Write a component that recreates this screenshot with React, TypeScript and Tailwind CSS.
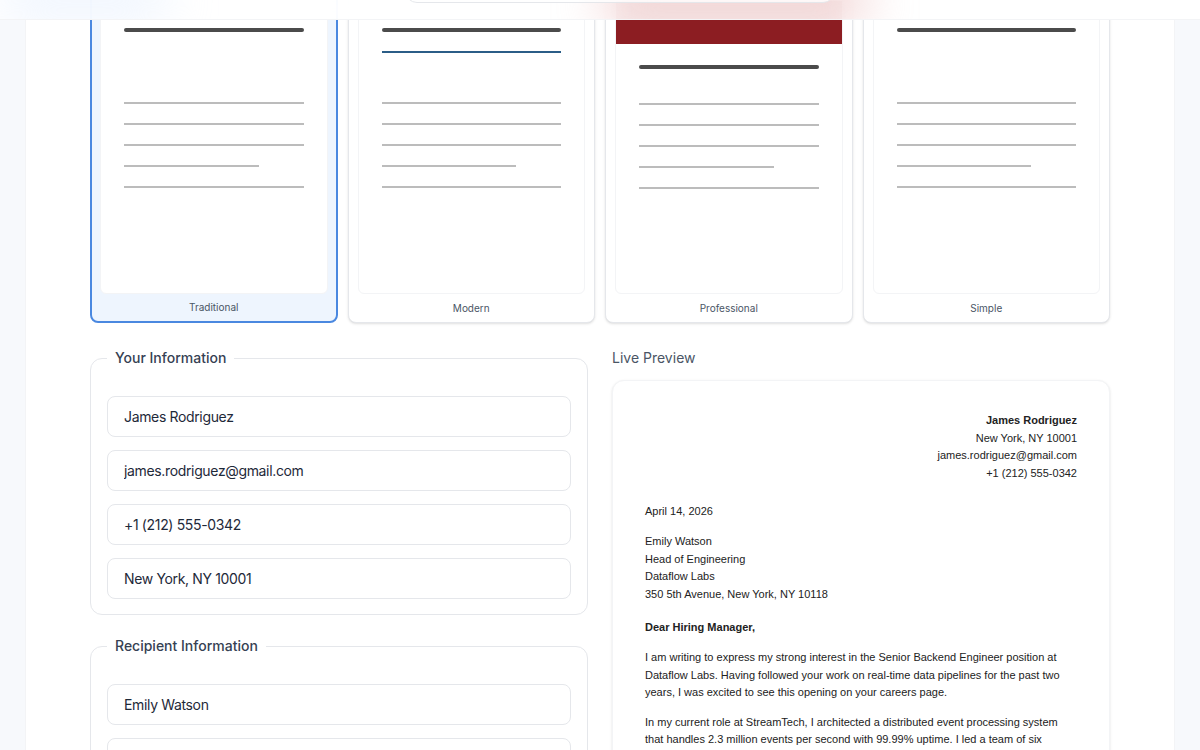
import * as React from "react";

type Variant = "traditional" | "modern" | "professional" | "simple";

interface Template {
  id: Variant;
  name: string;
}

const templates: Template[] = [
  { id: "traditional", name: "Traditional" },
  { id: "modern", name: "Modern" },
  { id: "professional", name: "Professional" },
  { id: "simple", name: "Simple" },
];

const sender = {
  name: "James Rodriguez",
  email: "james.rodriguez@gmail.com",
  phone: "+1 (212) 555-0342",
  location: "New York, NY 10001",
};

const recipient = {
  name: "Emily Watson",
  title: "Head of Engineering",
  company: "Dataflow Labs",
  address: "350 5th Avenue, New York, NY 10118",
};

const paragraphs = [
  "I am writing to express my strong interest in the Senior Backend Engineer position at Dataflow Labs. Having followed your work on real-time data pipelines for the past two years, I was excited to see this opening on your careers page.",
  "In my current role at StreamTech, I architected a distributed event processing system that handles 2.3 million events per second with 99.99% uptime. I led a team of six engineers through a migration from batch jobs to streaming, cutting data latency from hours to under two seconds.",
  "I would welcome the chance to bring this experience to Dataflow Labs and help scale the platform your customers rely on. Thank you for your time and consideration.",
];

const Thumb = ({ variant }: { variant: Variant }) => {
  const linesTop =
    variant === "modern" ? "mt-[49px]" : variant === "professional" ? "mt-[34px]" : "mt-[70px]";

  return (
    <div className="h-[294px] overflow-hidden rounded-b-md border border-gray-100 bg-white">
      {variant === "professional" && <div className="h-[43px] bg-[#8c1d22]" />}
      <div className={variant === "professional" ? "px-[23px] pt-[21px]" : "px-[23px] pt-[27px]"}>
        <div className="h-[4px] rounded-full bg-[#4b4b4b]" />
        {variant === "modern" && <div className="mt-[19px] h-[2px] bg-[#2b5d87]" />}
        <div className={`flex flex-col gap-[19px] ${linesTop}`}>
          <div className="h-[2px] bg-[#bcbcbc]" />
          <div className="h-[2px] bg-[#bcbcbc]" />
          <div className="h-[2px] bg-[#bcbcbc]" />
          <div className="h-[2px] w-3/4 bg-[#bcbcbc]" />
          <div className="h-[2px] bg-[#bcbcbc]" />
        </div>
      </div>
    </div>
  );
};

const TemplateCard = ({ template, selected }: { template: Template; selected: boolean }) => (
  <button
    type="button"
    className={
      selected
        ? "flex flex-col rounded-lg border-2 border-[#4a88e0] bg-[#eef5fe] px-[8px] pt-[8px] text-left"
        : "flex flex-col rounded-lg border border-gray-200 bg-white px-[9px] pt-[9px] text-left shadow-sm"
    }
  >
    <Thumb variant={template.id} />
    <span
      className={
        selected
          ? "flex h-[27px] items-center justify-center text-[10px] text-gray-600"
          : "flex h-[28px] items-center justify-center text-[10px] text-gray-600"
      }
    >
      {template.name}
    </span>
  </button>
);

const Field = ({ value }: { value: string }) => (
  <input
    defaultValue={value}
    className="h-[41px] w-full rounded-lg border border-gray-200 bg-white px-4 text-[14px] tracking-tight text-gray-800 outline-none"
  />
);

const Section = ({ title, values }: { title: string; values: string[] }) => (
  <fieldset className="rounded-xl border border-gray-200 px-4 pb-[15px] pt-[28px]">
    <legend className="px-2 text-sm font-medium leading-5 text-gray-700">{title}</legend>
    <div className="flex flex-col gap-[13px]">
      {values.map((v) => (
        <Field key={v} value={v} />
      ))}
    </div>
  </fieldset>
);

export default function App() {
  return (
    <div className="relative h-[750px] overflow-hidden bg-[#f7f9fc] font-['Inter',sans-serif]">
      {/* header, mostly scrolled away */}
      <div className="fixed inset-x-0 top-0 z-10 h-[20px] overflow-hidden border-b border-gray-100 bg-white/95 backdrop-blur-md">
        <div className="absolute left-0 top-[-20px] h-[40px] w-[170px] rounded-full bg-blue-100/50 blur-xl" />
        <div className="absolute left-[600px] top-[-24px] h-[48px] w-[270px] rounded-full bg-[#e9b7b7]/60 blur-xl" />
        <div className="absolute left-[405px] top-[-40px] h-[43px] w-[430px] rounded-xl border border-gray-200 bg-white/80" />
      </div>

      <main className="mx-[25px] min-h-[750px] border-x border-gray-100 bg-white px-16 pb-16">
        <div className="-mt-[10px] grid grid-cols-4 gap-[10px]">
          {templates.map((t) => (
            <TemplateCard key={t.id} template={t} selected={t.id === "traditional"} />
          ))}
        </div>

        <div className="mt-[25px] grid grid-cols-2 items-start gap-6">
          <div className="flex flex-col gap-[21px]">
            <Section
              title="Your Information"
              values={[sender.name, sender.email, sender.phone, sender.location]}
            />
            <Section
              title="Recipient Information"
              values={[recipient.name, recipient.title, recipient.company, recipient.address]}
            />
          </div>

          <div>
            <h3 className="mb-3 text-sm leading-5 text-gray-600">Live Preview</h3>
            <div className="rounded-xl border border-gray-100 bg-white px-8 pb-10 pt-[31px] font-['Liberation_Sans',Arial,sans-serif] text-[11px] leading-[17.6px] text-[#222] shadow-sm">
              <div className="mb-[21px] text-right">
                <p className="font-bold">{sender.name}</p>
                <p>{sender.location}</p>
                <p>{sender.email}</p>
                <p>{sender.phone}</p>
              </div>
              <p className="mb-3">April 14, 2026</p>
              <div className="mb-4">
                <p>{recipient.name}</p>
                <p>{recipient.title}</p>
                <p>{recipient.company}</p>
                <p>{recipient.address}</p>
              </div>
              <p className="mb-3 font-bold">Dear Hiring Manager,</p>
              {paragraphs.map((p, i) => (
                <p key={i} className="mb-3">
                  {p}
                </p>
              ))}
            </div>
          </div>
        </div>
      </main>
    </div>
  );
}
